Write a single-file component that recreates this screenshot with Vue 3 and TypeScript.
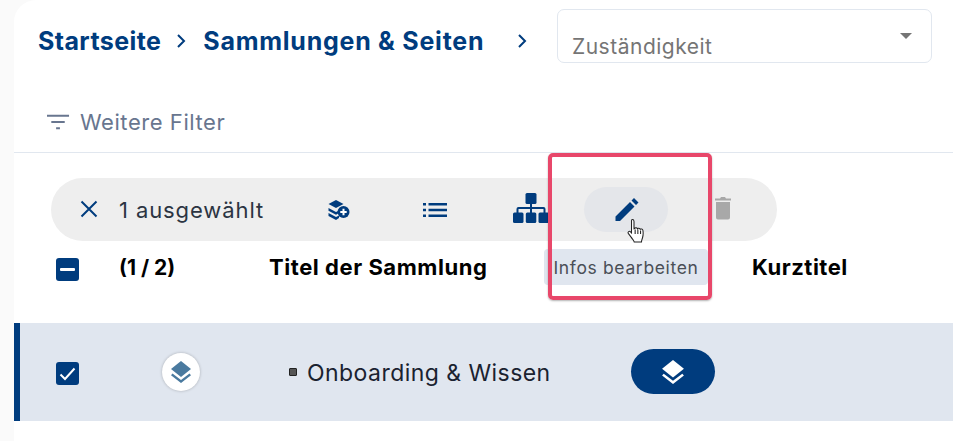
<script setup lang="ts">
// Toolbar icons are spaced evenly, 96px per slot
const selectedCount = 1;
const totalCount = 2;
</script>

<template>
  <div class="page">
    <div class="main">
      <div class="top-row">
        <nav class="crumbs">
          <span>Startseite</span>
          <svg class="chev first" viewBox="0 0 10 16"><path d="M2 2l6 6-6 6" /></svg>
          <span class="current">Sammlungen &amp; Seiten</span>
          <svg class="chev second" viewBox="0 0 10 16"><path d="M2 2l6 6-6 6" /></svg>
        </nav>
        <div class="select">
          <span class="select-label">Zuständigkeit</span>
          <span class="select-arrow"></span>
        </div>
      </div>

      <div class="filter-row">
        <svg class="filter-icon" viewBox="0 0 24 16">
          <path d="M0 1.500h23M4.500 8h14M9.500 14.500h4" />
        </svg>
        <span>Weitere Filter</span>
      </div>

      <div class="content">
        <div class="toolbar">
          <svg class="close" viewBox="0 0 18 18"><path d="M1.500 1.500l15 15M16.500 1.500l-15 15" /></svg>
          <span class="count">{{ selectedCount }} ausgewählt</span>
          <div class="actions">
            <div class="action">
              <svg width="24" height="22" viewBox="0 0 24 22" class="icon">
                <path d="M9 1l7.500 4-7.500 4-7.500-4z" />
                <path d="M1.500 9l7.500 4 3-1.600v2.700L9 15.700 1.500 11.700z" />
                <path d="M1.500 14l7.500 4 3-1.600v2.700L9 21 1.500 17z" />
                <circle cx="16.500" cy="13" r="6" />
                <path class="plus" d="M16.500 9.800v6.400M13.300 13h6.400" />
              </svg>
            </div>
            <div class="action">
              <svg width="24" height="14" viewBox="0 0 24 14" class="icon">
                <path d="M0 0h3v2.600H0zM5.500 0H24v2.600H5.500zM0 5.700h3v2.600H0zM5.500 5.700H24v2.600H5.500zM0 11.400h3V14H0zM5.500 11.400H24V14H5.500z" />
              </svg>
            </div>
            <div class="action">
              <svg width="36" height="30" viewBox="0 0 36 30" class="icon up-2">
                <rect x="12.500" y="0" width="11" height="11" rx="1.500" />
                <rect x="0" y="19.500" width="10.500" height="10.500" rx="1.500" />
                <rect x="12.800" y="19.500" width="10.500" height="10.500" rx="1.500" />
                <rect x="25.500" y="19.500" width="10.500" height="10.500" rx="1.500" />
                <path d="M17 10h2v4h11.500a2 2 0 0 1 2 2v4h-2v-4H19v4h-2v-4H5.500v4h-2v-4a2 2 0 0 1 2-2H17z" />
              </svg>
            </div>
            <div class="action hovered">
              <svg width="24" height="24" viewBox="0 0 24 24" class="icon up-1">
                <path d="M0.500 19.500L15 5l4.500 4.500L5 24H0.500zM16.500 3.500L19 1l4.500 4.500L21 8z" />
              </svg>
            </div>
            <div class="action">
              <svg width="18" height="24" viewBox="0 0 18 24" class="icon trash up-2">
                <path d="M1 2.500h5L7 1h4l1 1.500h5v2H1zM2 6h14v15.500a2 2 0 0 1-2 2H4a2 2 0 0 1-2-2z" />
              </svg>
            </div>
          </div>
        </div>

        <div class="table-head">
          <span class="box head-box"><span class="dash"></span></span>
          <span class="col-count">({{ selectedCount }} / {{ totalCount }})</span>
          <span class="col-title">Titel der Sammlung</span>
          <span class="col-short">Kurztitel</span>
        </div>

        <div class="table-row">
          <span class="box row-box">
            <svg width="17" height="14" viewBox="0 0 17 14"><path d="M1.500 7.500l4.500 4.500L15.500 1.500" /></svg>
          </span>
          <span class="type-badge">
            <svg width="22" height="22" viewBox="0 0 22 22">
              <path d="M11 0l10 8-10 8L1 8z" />
              <path d="M2.500 12.500L11 19l8.500-6.500 1.500 1.800L11 22 1 14.300z" />
            </svg>
          </span>
          <span class="bullet"></span>
          <span class="row-title">Onboarding &amp; Wissen</span>
          <span class="type-pill">
            <svg width="24" height="24" viewBox="0 0 22 22">
              <path d="M11 0l10 8-10 8L1 8z" />
              <path d="M2.500 12.500L11 19l8.500-6.500 1.500 1.800L11 22 1 14.300z" />
            </svg>
          </span>
        </div>
      </div>
    </div>

    <!-- Overlays: tooltip, highlight frame and mouse pointer -->
    <div class="tooltip">Infos bearbeiten</div>
    <div class="highlight"></div>
    <svg class="cursor" width="19" height="26" viewBox="0 0 18 25">
      <path
        d="M5 1.500c1 0 1.600.7 1.600 1.800v7l.6-.2c.3-.9 2.300-1 2.700.2.500-.8 2.300-.7 2.700.5.700-.5 2.400-.2 2.600 1.200.3 2 .2 5-.4 7-.4 1.400-1 2.300-1 4H6.800c-.3-1.400-1.700-2.800-3-4.600L1.100 14.800c-.8-1.300 1-2.700 2.200-1.500l.9 1V3.300C4.200 2.200 4.200 1.500 5 1.500z"
      />
      <path d="M7.700 11v4.500M10.300 11v4.500M12.900 12v3.500" />
    </svg>
  </div>
</template>

<style scoped>
.page {
  position: relative;
  display: flex;
  width: 953px;
  height: 441px;
  overflow: hidden;
  background: #fafafa;
  font-family: Inter, "Liberation Sans", sans-serif;
}

.main {
  flex: 1;
  margin-left: 14px;
  background: #fff;
  border-top-left-radius: 22px;
}

.top-row {
  display: flex;
  height: 73px;
  padding: 9px 21px 0 24px;
  box-sizing: border-box;
  justify-content: space-between;
  align-items: flex-start;
}

.crumbs {
  display: flex;
  align-items: center;
  height: 64px;
  font-size: 25px;
  font-weight: 700;
  color: #003c7e;
  letter-spacing: 0.4px;
}

.crumbs .current {
  letter-spacing: 0.75px;
}

.chev {
  width: 10px;
  height: 16px;
}

.chev.first {
  margin: 0 17px 0 15px;
}

.chev.second {
  margin-left: 33px;
}

.chev path {
  fill: none;
  stroke: #003c7e;
  stroke-width: 2;
}

.select {
  position: relative;
  width: 375px;
  height: 54px;
  box-sizing: border-box;
  border: 1px solid #e1e7ef;
  border-radius: 7px;
  padding: 26px 14px 0;
  font-size: 21px;
  line-height: 22px;
  letter-spacing: 0.5px;
  color: #757575;
}

.select-arrow {
  position: absolute;
  top: 23px;
  right: 19px;
  border-left: 6px solid transparent;
  border-right: 6px solid transparent;
  border-top: 6px solid #757575;
}

.filter-row {
  display: flex;
  align-items: center;
  gap: 10px;
  height: 81px;
  margin-top: -1px;
  padding: 20px 0 0 33px;
  box-sizing: border-box;
  border-bottom: 1px solid #e1e7ef;
  font-size: 22px;
  letter-spacing: 0.55px;
  color: #68768f;
}

.filter-icon {
  width: 23px;
  height: 16px;
}

.filter-icon path {
  fill: none;
  stroke: #68768f;
  stroke-width: 2.200;
}

.content {
  padding-top: 25px;
}

.toolbar {
  display: flex;
  align-items: center;
  width: 726px;
  height: 63px;
  margin-left: 37px;
  background: #eee;
  border-radius: 32px;
}

.close {
  width: 18px;
  height: 18px;
  margin: -2px 0 0 29px;
}

.close path {
  fill: none;
  stroke: #003c7e;
  stroke-width: 2;
}

.count {
  width: 171px;
  margin-left: 21px;
  font-size: 22px;
  letter-spacing: 0.9px;
  color: #2b3442;
}

.actions {
  display: flex;
  margin-left: 1px;
}

.action {
  display: flex;
  align-items: center;
  justify-content: center;
  width: 96px;
  height: 45px;
}

.action.hovered {
  width: 84px;
  margin: 0 7px 0 5px;
  padding-left: 2px;
  box-sizing: border-box;
  border-radius: 23px;
  background: #e4e6ea;
}

.icon {
  fill: #003c7e;
}

.icon.up-1 {
  margin-top: -2px;
}

.icon.up-2 {
  margin-top: -4px;
}

.icon .plus {
  fill: none;
  stroke: #fff;
  stroke-width: 2;
}

.icon.trash {
  fill: #a8a8a8;
}

.table-head {
  display: flex;
  align-items: center;
  height: 52px;
  padding-left: 42px;
  font-size: 21px;
  font-weight: 700;
  color: #000;
}

.box {
  display: flex;
  align-items: center;
  justify-content: center;
  flex: none;
  width: 23px;
  height: 23px;
  border-radius: 3px;
  background: #003c7e;
}

.head-box {
  margin-top: 4px;
}

.row-box {
  margin-top: 3px;
}

.dash {
  width: 15px;
  height: 3px;
  border-radius: 1px;
  background: #fff;
}

.box svg {
  fill: none;
  stroke: #fff;
  stroke-width: 2;
}

.col-count {
  width: 150px;
  margin-left: 40px;
}

.col-title {
  width: 483px;
  font-size: 22px;
  letter-spacing: 0.55px;
}

.col-short {
  font-size: 22px;
  letter-spacing: 0.5px;
}

.table-row {
  display: flex;
  align-items: center;
  height: 98px;
  margin-top: 30px;
  padding-left: 36px;
  border-left: 6px solid #003c7e;
  background: #e0e6ef;
}

.type-badge {
  display: flex;
  align-items: center;
  justify-content: center;
  flex: none;
  width: 38px;
  height: 38px;
  margin-left: 83px;
  border-radius: 50%;
  background: #fff;
  box-shadow: 0 0 3px rgba(0, 0, 0, 0.25);
}

.type-badge svg {
  fill: #4a7a9f;
}

.bullet {
  flex: none;
  width: 8px;
  height: 8px;
  margin-left: 89px;
  border: 1px solid #222;
  box-sizing: border-box;
  background: #555;
  border-radius: 1px;
}

.row-title {
  width: 324px;
  margin: 2px 0 0 10px;
  font-size: 23px;
  letter-spacing: 0.45px;
  color: #1a2230;
}

.type-pill {
  display: flex;
  align-items: center;
  justify-content: center;
  width: 84px;
  height: 45px;
  margin-top: -1px;
  border-radius: 23px;
  background: #003c7e;
}

.type-pill svg {
  fill: #fff;
}

.tooltip {
  position: absolute;
  left: 544px;
  top: 249px;
  display: flex;
  align-items: center;
  justify-content: center;
  width: 164px;
  height: 36px;
  border-radius: 4px;
  background: #e0e6ef;
  font-size: 17.500px;
  letter-spacing: 0.65px;
  color: #4a4f57;
}

.highlight {
  position: absolute;
  left: 548px;
  top: 153px;
  width: 164px;
  height: 147px;
  box-sizing: border-box;
  border: 4px solid #e8476a;
  border-radius: 5px;
  box-shadow: 0 1px 2px rgba(0, 0, 0, 0.3);
}

.cursor {
  position: absolute;
  left: 627px;
  top: 218px;
}

.cursor path {
  fill: #fff;
  stroke: #222;
  stroke-width: 1;
}
</style>
